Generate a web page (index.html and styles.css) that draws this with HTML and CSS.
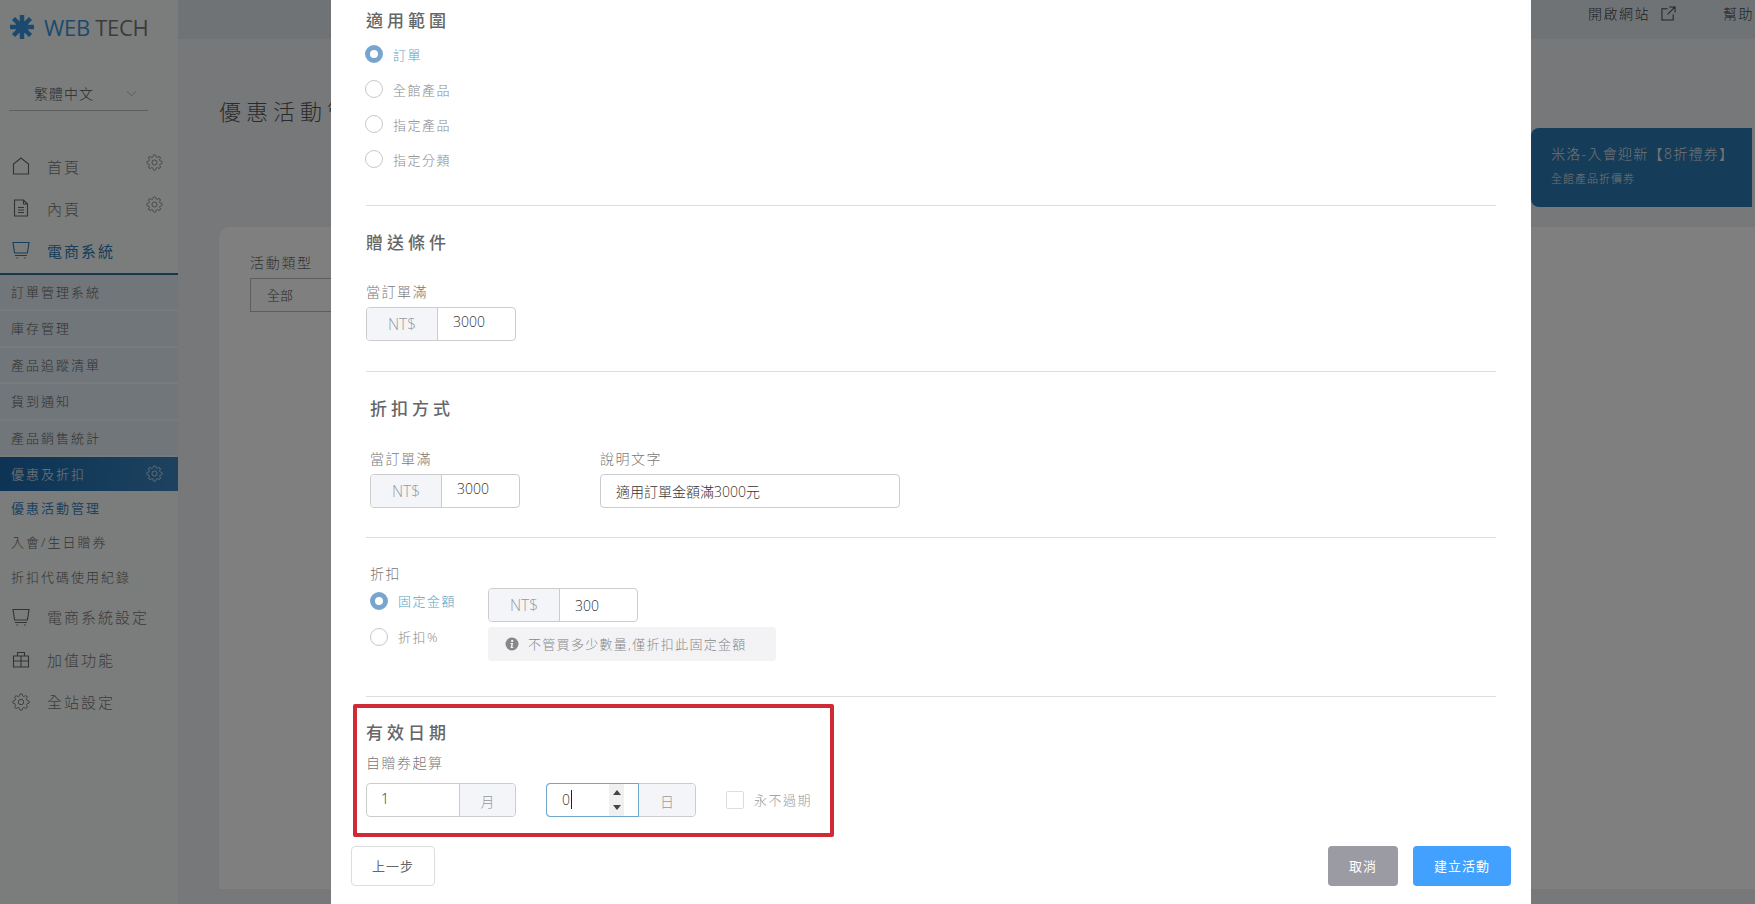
FILE: index.html
```html
<!DOCTYPE html>
<html>
<head>
  <meta charset="utf-8">
  <title>優惠活動管理</title>
  <link rel="stylesheet" href="styles.css">
</head>
<body>
  <svg class="defs" width="0" height="0">
    <symbol id="i-gear" viewBox="0 0 24 24"><circle cx="12" cy="12" r="3.6"/><path d="M19.4 15a1.65 1.65 0 0 0 .33 1.82l.06.06a2 2 0 0 1 0 2.83 2 2 0 0 1-2.83 0l-.06-.06a1.65 1.65 0 0 0-1.82-.33 1.65 1.65 0 0 0-1 1.51V21a2 2 0 0 1-2 2 2 2 0 0 1-2-2v-.09A1.65 1.65 0 0 0 9 19.4a1.65 1.65 0 0 0-1.82.33l-.06.06a2 2 0 0 1-2.83 0 2 2 0 0 1 0-2.83l.06-.06a1.65 1.65 0 0 0 .33-1.82 1.65 1.65 0 0 0-1.51-1H3a2 2 0 0 1-2-2 2 2 0 0 1 2-2h.09A1.65 1.65 0 0 0 4.6 9a1.65 1.65 0 0 0-.33-1.82l-.06-.06a2 2 0 0 1 0-2.83 2 2 0 0 1 2.83 0l.06.06a1.65 1.65 0 0 0 1.82.33H9a1.65 1.65 0 0 0 1-1.51V3a2 2 0 0 1 2-2 2 2 0 0 1 2 2v.09a1.65 1.65 0 0 0 1 1.51 1.65 1.65 0 0 0 1.82-.33l.06-.06a2 2 0 0 1 2.83 0 2 2 0 0 1 0 2.83l-.06.06a1.65 1.65 0 0 0-.33 1.82V9a1.65 1.65 0 0 0 1.51 1H21a2 2 0 0 1 2 2 2 2 0 0 1-2 2h-.09a1.65 1.65 0 0 0-1.51 1z"/></symbol>
    <symbol id="i-cart" viewBox="0 0 18 18"><path d="M1 1.5h16l-1.6 10.5H2.600zM3 14.500h12"/><path d="M4.500 17h1.500M12 17h1.500"/></symbol>
  </svg>

  <div class="app">
    <aside class="sidebar">
      <div class="logo">
        <svg class="logo-mark" viewBox="0 0 24 24"><path d="M12 0v24M0 12h24M3.500 3.500l17 17M20.500 3.500l-17 17"/><circle cx="12" cy="12" r="4"/></svg>
        <span class="logo-text"><b>WEB</b> TECH</span>
      </div>
      <div class="lang">
        <span>繁體中文</span>
        <svg class="chevron" viewBox="0 0 12 7"><path d="M1 1l5 5 5-5"/></svg>
      </div>

      <nav class="nav">
        <div class="nav-item">
          <svg class="nav-icon" viewBox="0 0 18 18"><path d="M1.500 17V7L9 1l7.500 6v10z"/></svg>
          <span>首頁</span>
          <svg class="nav-gear"><use href="#i-gear"/></svg>
        </div>
        <div class="nav-item">
          <svg class="nav-icon" viewBox="0 0 18 18"><path d="M2.500 1h9l4 4v12h-13zM11.500 1v4h4M6 8.500h6M6 11h6M6 13.500h6"/></svg>
          <span>內頁</span>
          <svg class="nav-gear"><use href="#i-gear"/></svg>
        </div>
        <div class="nav-item nav-open">
          <svg class="nav-icon"><use href="#i-cart"/></svg>
          <span>電商系統</span>
        </div>
        <ul class="sub-list">
          <li>訂單管理系統</li>
          <li>庫存管理</li>
          <li>產品追蹤清單</li>
          <li>貨到通知</li>
          <li>產品銷售統計</li>
        </ul>
        <div class="sub-active">
          <span>優惠及折扣</span>
          <svg class="nav-gear"><use href="#i-gear"/></svg>
        </div>
        <ul class="sub-plain">
          <li class="current">優惠活動管理</li>
          <li>入會/生日贈券</li>
          <li>折扣代碼使用紀錄</li>
        </ul>
        <div class="nav-item nav-low">
          <svg class="nav-icon"><use href="#i-cart"/></svg>
          <span>電商系統設定</span>
        </div>
        <div class="nav-item nav-low">
          <svg class="nav-icon" viewBox="0 0 18 18"><path d="M1.500 6h15v11h-15zM1.500 11h15M9 6v11M5.500 6V2.500h7V6"/></svg>
          <span>加值功能</span>
        </div>
        <div class="nav-item nav-low">
          <svg class="nav-icon"><use href="#i-gear"/></svg>
          <span>全站設定</span>
        </div>
      </nav>
    </aside>

    <main class="main">
      <header class="topbar">
        <span>開啟網站</span>
        <svg class="ext-icon" viewBox="0 0 16 16"><path d="M13 9v6H1V3h6M9 1h6v6M15 1L7 9"/></svg>
        <span class="help">幫助</span>
      </header>
      <div class="title-row">
        <h1>優惠活動管理</h1>
        <div class="coupon">
          <div class="coupon-name">米洛-入會迎新【8折禮券】</div>
          <div class="coupon-sub">全館產品折價券</div>
        </div>
      </div>
      <section class="card">
        <div class="card-label">活動類型</div>
        <div class="card-select">全部</div>
      </section>
    </main>
  </div>

  <div class="overlay"></div>

  <div class="modal">
    <h2 class="sec-title first">適用範圍</h2>
    <div class="radio-list scope">
      <div class="radio on"><i></i>訂單</div>
      <div class="radio"><i></i>全館產品</div>
      <div class="radio"><i></i>指定產品</div>
      <div class="radio"><i></i>指定分類</div>
    </div>
    <hr class="rule rule-a">

    <h2 class="sec-title gift">贈送條件</h2>
    <div class="field-label">當訂單滿</div>
    <div class="group">
      <span class="addon left">NT$</span>
      <span class="value">3000</span>
    </div>
    <hr class="rule rule-b">

    <div class="shifted">
      <h2 class="sec-title">折扣方式</h2>
      <div class="form-row">
        <div>
          <div class="field-label">當訂單滿</div>
          <div class="group">
            <span class="addon left">NT$</span>
            <span class="value">3000</span>
          </div>
        </div>
        <div>
          <div class="field-label">說明文字</div>
          <div class="text-box">適用訂單金額滿3000元</div>
        </div>
      </div>
    </div>
    <hr class="rule rule-c">

    <div class="shifted">
      <div class="field-label">折扣</div>
      <div class="discount-row">
        <div class="radio-list tight">
          <div class="radio on"><i></i>固定金額</div>
          <div class="radio"><i></i>折扣%</div>
        </div>
        <div class="discount-fields">
          <div class="group">
            <span class="addon left">NT$</span>
            <span class="value low">300</span>
          </div>
          <div class="hint">
            <svg class="hint-icon" viewBox="0 0 14 14"><circle cx="7" cy="7" r="6.500"/><path class="dot" d="M6.200 3h2v2h-2zM5.500 6h2.600l-.8 4h.9v1H5.600l.8-4h-.9z"/></svg>
            不管買多少數量,僅折扣此固定金額
          </div>
        </div>
      </div>
    </div>
    <hr class="rule rule-d">

    <section class="expiry">
      <h2 class="sec-title">有效日期</h2>
      <div class="field-label">自贈券起算</div>
      <div class="expiry-row">
        <div class="group">
          <span class="value num">1</span>
          <span class="addon right">月</span>
        </div>
        <div class="group focused">
          <span class="value num">0<u class="caret"></u></span>
          <span class="spinner">
            <svg viewBox="0 0 8 5"><path d="M4 0l4 5H0z"/></svg>
            <svg viewBox="0 0 8 5"><path d="M0 0h8L4 5z"/></svg>
          </span>
          <span class="addon right">日</span>
        </div>
        <label class="never"><i></i>永不過期</label>
      </div>
    </section>

    <div class="actions">
      <button class="btn btn-back">上一步</button>
      <div class="actions-right">
        <button class="btn btn-cancel">取消</button>
        <button class="btn btn-create">建立活動</button>
      </div>
    </div>
  </div>
</body>
</html>
```

FILE: styles.css
```css
* {
  box-sizing: border-box;
}

html,
body {
  margin: 0;
  height: 904px;
  overflow: hidden;
}

body {
  position: relative;
  font-family: "Open Sans", "Noto Sans CJK TC", sans-serif;
  font-weight: 300;
  color: #666;
}

.defs {
  position: absolute;
}

ul {
  list-style: none;
  margin: 0;
  padding: 0;
}

symbol,
svg {
  fill: none;
  stroke: currentColor;
}

/* page behind the dialog */
.app {
  display: flex;
  height: 904px;
}

.sidebar {
  width: 178px;
  flex: none;
  background: #f6faf8;
  color: #6e6e6e;
}

.logo {
  display: flex;
  align-items: center;
  height: 54px;
  padding-left: 10px;
  gap: 10px;
}

.logo-mark {
  width: 24px;
  height: 24px;
  color: #3694dc;
  fill: #3694dc;
  stroke-width: 4.500;
}

.logo-text {
  font-size: 22px;
  font-weight: 400;
  color: #777;
  letter-spacing: -0.3px;
  white-space: nowrap;
}

.logo-text b {
  font-weight: 400;
  color: #3694dc;
}

.lang {
  display: flex;
  align-items: center;
  justify-content: space-between;
  margin: 28px 30px 0 9px;
  width: 139px;
  height: 29px;
  padding: 0 11px 6px 25px;
  border-bottom: 1px solid #bbb;
  font-size: 14px;
  letter-spacing: 1px;
  color: #555;
}

.chevron {
  width: 11px;
  height: 7px;
  color: #aaa;
}

.nav {
  margin-top: 34px;
}

.nav-item {
  display: flex;
  align-items: center;
  height: 42px;
  padding-left: 12px;
  font-size: 15px;
  letter-spacing: 2px;
  color: #777;
  white-space: nowrap;
}

.nav-icon {
  width: 18px;
  height: 18px;
  margin-right: 17px;
  flex: none;
  stroke-width: 1.100;
  color: #666;
}

.nav-gear {
  width: 17px;
  height: 17px;
  margin-left: auto;
  margin-right: 15px;
  margin-top: -7px;
  stroke-width: 1.300;
  color: #888;
}

.nav-open {
  height: 46px;
  padding-bottom: 2px;
  font-weight: 400;
  color: #2e7cb4;
  border-bottom: 2px solid #2e6f9f;
}

.nav-open .nav-icon {
  color: #2e7cb4;
}

.sub-list li {
  height: 36.400px;
  padding-left: 11px;
  line-height: 34px;
  font-size: 13px;
  letter-spacing: 2px;
  color: #666;
  background: #e0ecf2;
  border-bottom: 2px solid #f0f4f6;
}

.sub-active {
  display: flex;
  align-items: center;
  height: 34px;
  padding-left: 11px;
  font-size: 13px;
  letter-spacing: 2px;
  color: #eee;
  background: linear-gradient(100deg, #1a66aa, #3a86c0);
}

.sub-active .nav-gear {
  margin-top: 0;
  color: #cfe0ee;
}

.sub-plain {
  padding-bottom: 1px;
}

.sub-plain li {
  height: 34.500px;
  padding-left: 11px;
  line-height: 34px;
  font-size: 13px;
  letter-spacing: 2px;
  color: #666;
}

.sub-plain .current {
  color: #3c86c0;
  font-weight: 400;
}

.nav-low {
  height: 42.500px;
}

.main {
  flex: 1;
  min-width: 0;
  background: #eef0f4;
  display: flex;
  flex-direction: column;
}

.topbar {
  display: flex;
  align-items: flex-start;
  height: 39px;
  padding: 3px 0 0 1410px;
  background: #dee6ec;
  font-size: 14px;
  letter-spacing: 1.500px;
  color: #444;
  white-space: nowrap;
}

.ext-icon {
  width: 15px;
  height: 15px;
  margin: 3px 0 0 11px;
  stroke-width: 1.100;
}

.help {
  margin-left: 47px;
}

.title-row {
  display: flex;
  justify-content: space-between;
  height: 188px;
  padding-left: 41px;
}

.title-row h1 {
  margin: 55px 0 0;
  font-size: 22px;
  font-weight: 300;
  letter-spacing: 5px;
  color: #555;
}

.coupon {
  align-self: flex-start;
  width: 221px;
  height: 79px;
  margin: 89px 3px 0 0;
  padding: 15px 20px;
  background: #2a78b0;
  border-radius: 8px 0 0 8px;
  color: #e6e6e6;
}

.coupon-name {
  font-size: 14px;
  letter-spacing: 1.300px;
  white-space: nowrap;
}

.coupon-sub {
  font-size: 11px;
  letter-spacing: 1px;
  margin-top: 7px;
}

.card {
  height: 662px;
  margin-left: 41px;
  padding: 25px 31px;
  background: #fff;
  border-radius: 10px 0 0 0;
}

.card-label {
  font-size: 14px;
  letter-spacing: 1.700px;
  color: #666;
}

.card-select {
  width: 300px;
  height: 34px;
  margin-top: 6px;
  padding-left: 16px;
  line-height: 32px;
  font-size: 13px;
  color: #555;
  border: 1px solid #bbb;
}

.overlay {
  position: absolute;
  inset: 0;
  background: rgba(0, 0, 0, 0.5);
}

/* dialog */
.modal {
  position: absolute;
  top: 0;
  left: 331px;
  width: 1200px;
  height: 904px;
  overflow: hidden;
  padding: 0 35px;
  background: #fff;
}

.sec-title {
  margin: 0;
  font-size: 17px;
  line-height: 24px;
  font-weight: 500;
  letter-spacing: 4px;
  color: #666;
}

.sec-title.first {
  margin-top: 9px;
}

.sec-title.gift {
  margin-top: 25px;
}

.rule {
  border: 0;
  border-top: 1px solid #ddd;
  margin: 0;
}

.rule-a {
  margin-top: 28px;
}

.rule-b {
  margin-top: 30px;
}

.rule-c {
  margin-top: 29px;
}

.rule-d {
  margin-top: 35px;
}

.radio-list.scope {
  margin: 3.500px 0 0 -1px;
}

.radio {
  display: flex;
  align-items: center;
  height: 35px;
  font-size: 13px;
  letter-spacing: 1.500px;
  color: #888;
}

.radio i {
  width: 18px;
  height: 18px;
  margin-right: 10px;
  border: 1px solid #c8c8c8;
  border-radius: 50%;
  background: #fff;
}

.radio.on {
  color: #5aa2c0;
}

.radio.on i {
  border: 5px solid #77a5cd;
}

.field-label {
  font-size: 14px;
  line-height: 20px;
  letter-spacing: 1.500px;
  color: #777;
}

.gift + .field-label {
  margin-top: 27px;
}

.group {
  display: flex;
  width: 150px;
  height: 34px;
  margin-top: 5px;
  font-size: 14px;
  color: #333;
  border: 1px solid #ccc;
  border-radius: 4px;
  background: #fff;
}

.addon {
  display: flex;
  align-items: center;
  justify-content: center;
  flex: none;
  font-size: 14px;
  background: #f4f5f9;
  color: #999;
}

.addon.left {
  width: 71px;
  font-size: 15.500px;
  border-right: 1px solid #ccc;
  border-radius: 3px 0 0 3px;
}

.addon.right {
  width: 56px;
  padding-top: 3px;
  margin-left: auto;
  border-left: 1px solid #ccc;
  border-radius: 0 3px 3px 0;
}

.value {
  padding: 4px 0 0 15px;
  line-height: 20px;
}

.value.low {
  padding-top: 7px;
}

.value.num {
  flex: 1;
  padding: 5px 0 0 14px;
}

.shifted {
  padding-left: 4px;
}

.shifted .sec-title {
  margin-top: 25px;
}

.form-row {
  display: flex;
  gap: 80px;
  margin-top: 28px;
}

.text-box {
  width: 300px;
  height: 34px;
  margin-top: 5px;
  padding-left: 15px;
  line-height: 33px;
  font-size: 14px;
  color: #333;
  border: 1px solid #ccc;
  border-radius: 4px;
}

.rule-c + .shifted {
  margin-top: 26px;
}

.discount-row {
  display: flex;
  gap: 32px;
  margin-top: 4px;
}

.radio-list.tight {
  margin-top: -5px;
}

.radio-list.tight .radio {
  height: 36px;
}

.discount-fields {
  display: flex;
  flex-direction: column;
  gap: 5px;
}

.discount-fields .group {
  margin-top: 0;
}

.hint {
  display: flex;
  align-items: center;
  width: 288px;
  height: 34px;
  padding-left: 17px;
  background: #f3f3f5;
  border-radius: 4px;
  font-size: 13px;
  letter-spacing: 1.300px;
  color: #888;
  white-space: nowrap;
}

.hint-icon {
  width: 14px;
  height: 14px;
  margin-right: 9px;
  fill: #888;
  stroke: none;
}

.hint-icon .dot {
  fill: #f3f3f5;
}

.expiry {
  width: 481px;
  height: 133px;
  margin: 7px 0 0 -13px;
  padding: 13px 0 0 9px;
  border: 4px solid #cf2a35;
  border-radius: 2px;
}

.expiry .field-label {
  margin-top: 8px;
}

.expiry-row {
  display: flex;
  align-items: center;
  gap: 30px;
  margin-top: 10px;
}

.expiry-row .group {
  margin-top: 0;
}

.focused {
  position: relative;
}

.focused .value.num {
  margin: -1px 0 -1px -1px;
  padding: 6px 0 0 15px;
  border: 1px solid #6ea6cc;
  border-radius: 4px 0 0 4px;
}

.focused .addon.right {
  border-left: 0;
}

.caret {
  display: inline-block;
  width: 1px;
  height: 19px;
  margin-left: 1px;
  vertical-align: -4px;
  background: #222;
}

.spinner {
  position: absolute;
  top: 0;
  left: 62px;
  display: flex;
  flex-direction: column;
  align-items: center;
  justify-content: space-between;
  width: 15px;
  height: 32px;
  padding: 6px 0;
  background: #f0f0f0;
}

.spinner svg {
  width: 8px;
  height: 5px;
  fill: #444;
  stroke: none;
}

.never {
  display: flex;
  align-items: center;
  font-size: 13px;
  letter-spacing: 1.500px;
  color: #999;
}

.never i {
  width: 18px;
  height: 18px;
  margin-right: 10px;
  border: 1px solid #ddd;
  border-radius: 2px;
}

.actions {
  display: flex;
  justify-content: space-between;
  margin: 9px -15px 0 -15px;
}

.actions-right {
  display: flex;
  gap: 15px;
}

.btn {
  height: 40px;
  border: 0;
  border-radius: 4px;
  font-family: inherit;
  font-size: 13px;
  font-weight: 400;
  letter-spacing: 1px;
}

.btn-back {
  width: 84px;
  background: #fff;
  border: 1px solid #ddd;
  color: #666;
}

.btn-cancel {
  width: 70px;
  background: #9a9ba3;
  color: #fff;
}

.btn-create {
  width: 98px;
  background: #42a1ff;
  color: #fff;
}
```
